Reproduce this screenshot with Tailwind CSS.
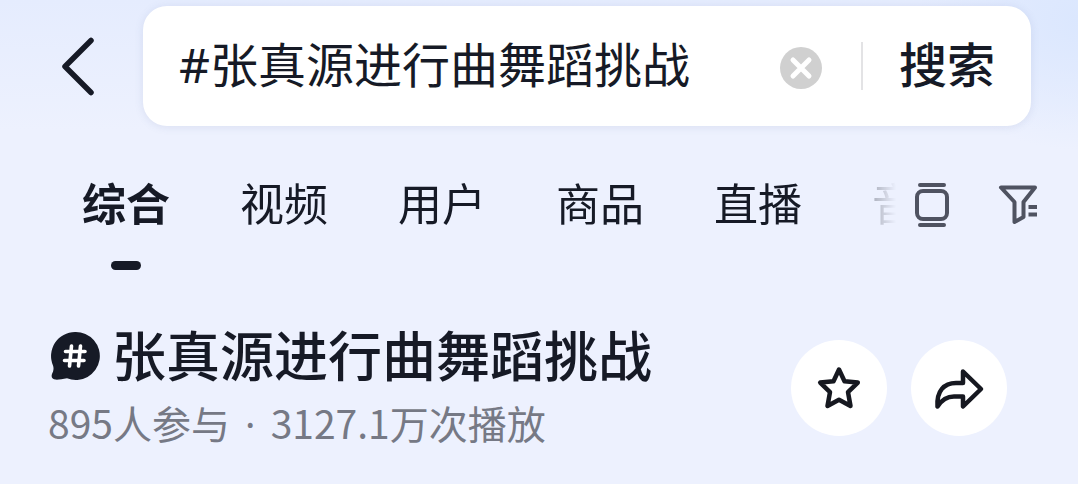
<!DOCTYPE html>
<html lang="zh-CN">
<head>
<meta charset="utf-8">
<meta name="viewport" content="width=device-width, initial-scale=1">
<title>搜索</title>
<script src="https://cdn.jsdelivr.net/npm/@tailwindcss/browser@4"></script>
</head>
<body class="min-h-screen bg-[#edf1fe] bg-[radial-gradient(ellipse_160px_130px_at_100%_20px,#dbe7fe,transparent),linear-gradient(to_bottom,#e5ecfe,#edf1fe_130px)] bg-no-repeat font-['Noto_Sans_CJK_SC',sans-serif] text-[#161a26]">
<header class="flex items-center pt-[6px] pr-[47px] pl-[60px]">
  <button type="button" aria-label="返回" class="mr-[47px] shrink-0">
    <svg class="block h-[60px] w-[36px]" viewBox="0 0 36 60" fill="none" stroke="currentColor" stroke-width="5.500" stroke-linecap="round" stroke-linejoin="round"><path d="M31 4.500L5 30.500L31 56.500"/></svg>
  </button>
  <form class="flex h-[120px] min-w-0 flex-1 items-center rounded-[24px] bg-white pr-[36px] pl-[36px] shadow-[0_1px_8px_rgba(100,110,160,0.14)]" onsubmit="return false">
    <input type="text" aria-label="搜索内容" value="#张真源进行曲舞蹈挑战" class="h-[72px] min-w-0 flex-1 bg-transparent pb-[2px] font-['Noto_Sans','Noto_Sans_CJK_SC',sans-serif] text-[48px] outline-none">
    <button type="reset" aria-label="清除" class="mr-[39px] ml-[40px] mt-[4px] shrink-0">
      <svg class="block size-[42px]" viewBox="0 0 42 42"><circle cx="21" cy="21" r="21" fill="#d0d0d0"/><path d="M13 13L29 29M29 13L13 29" stroke="#fff" stroke-width="5" stroke-linecap="round"/></svg>
    </button>
    <span class="mr-[36px] h-[48px] w-[2px] shrink-0 bg-[#e3e3e5]"></span>
    <button type="submit" class="shrink-0 pb-[8px] text-[48px] leading-[72px] font-medium">搜索</button>
  </form>
</header>
<div class="flex items-start pt-[42px] pr-[38px] pl-[82px]">
  <nav class="flex min-w-0 flex-1 gap-[70px] overflow-hidden text-[44px] leading-[68px] whitespace-nowrap [mask-image:linear-gradient(to_right,#000_calc(100%-70px),rgba(0,0,0,0.3)_calc(100%-24px),transparent)]">
    <a href="#all" aria-current="page" class="flex shrink-0 flex-col items-center gap-[25px] font-bold">综合<span class="h-[9px] w-[30px] rounded-full bg-[#161a26]"></span></a>
    <a href="#video" class="shrink-0">视频</a>
    <a href="#user" class="shrink-0">用户</a>
    <a href="#goods" class="shrink-0">商品</a>
    <a href="#live" class="shrink-0">直播</a>
    <a href="#music" class="shrink-0">音乐</a>
  </nav>
  <div class="flex shrink-0 gap-[48px] pt-[14px] pl-[18px] text-[#4f5361]">
    <button type="button" aria-label="切换视图">
      <svg class="block h-[46px] w-[36px]" viewBox="0 0 36 46" fill="none" stroke="currentColor" stroke-width="4" stroke-linecap="round"><path d="M6 3H30M6 43H30"/><rect x="3" y="9" width="30" height="28" rx="6"/></svg>
    </button>
    <button type="button" aria-label="筛选">
      <svg class="block h-[46px] w-[42px]" viewBox="0 0 42 46" fill="none" stroke="currentColor" stroke-width="4" stroke-linecap="round" stroke-linejoin="round"><path d="M3 5.500H37L25.500 20V35L16.500 40V20Z"/><path d="M30.500 25H39M30.500 32.500H39" stroke-linecap="butt"/></svg>
    </button>
  </div>
</div>
<main class="flex items-end justify-between pt-[44px] pr-[71px] pl-[48px]">
  <div class="min-w-0">
    <h1 class="flex items-center gap-[12px] text-[54px] leading-[80px] font-medium whitespace-nowrap">
      <svg class="mt-[4px] block size-[52px] shrink-0" viewBox="0 0 52 52"><path d="M27 2A24 24 0 1 1 19 48.300C14 49 10 50 7 49.500C4 49 3 47 4 44C5.500 41 6 38.500 5 35.500A24 24 0 0 1 27 2Z" fill="#161a26"/><path d="M23.500 16L21.500 36M32.500 16L30.500 36M17.500 21.500H37M16.500 30.500H36" stroke="#fff" stroke-width="3.600" stroke-linecap="round"/></svg>
      张真源进行曲舞蹈挑战
    </h1>
    <p class="text-[39px] leading-[56px] whitespace-nowrap text-[#767985]">895人参与<span class="mx-[5px] font-['Noto_Sans']"> · </span>3127.1万次播放</p>
  </div>
  <div class="mb-[16px] flex shrink-0 gap-[24px]">
    <button type="button" aria-label="收藏" class="grid size-[96px] place-items-center rounded-full bg-white">
      <svg class="block size-[48px]" viewBox="0 0 48 48" fill="none" stroke="#161820" stroke-width="4.500" stroke-linejoin="round"><path d="M24 5.500L29.500 17.200L42.800 18.600L33 28.200L35.500 42L24 35.800L12.500 42L15 28.200L5.200 18.600L18.500 17.200Z"/></svg>
    </button>
    <button type="button" aria-label="分享" class="grid size-[96px] place-items-center rounded-full bg-white">
      <svg class="block size-[52px]" viewBox="0 0 52 52" fill="none" stroke="#161820" stroke-width="4.500" stroke-linejoin="round"><path d="M30 9.500L48 27L30 44.500V34.500H21C13 34.500 8 39 4.500 44.500C3.500 29 11 21 23 21H30Z"/></svg>
    </button>
  </div>
</main>
</body>
</html>
